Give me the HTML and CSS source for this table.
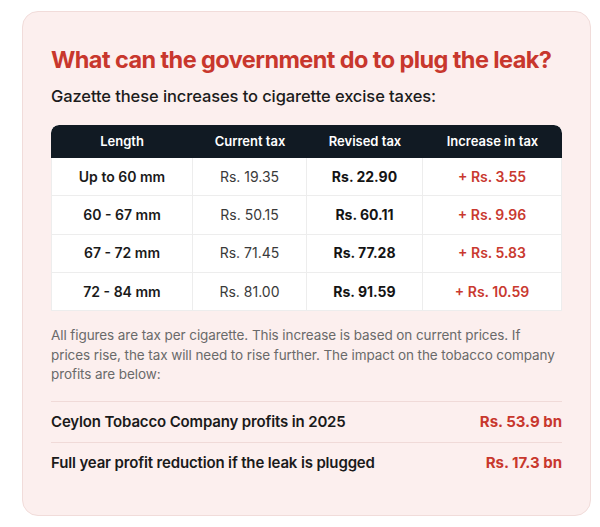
FILE: index.html
```html
<!DOCTYPE html>
<html lang="en">
<head>
<meta charset="utf-8">
<title>Plug the leak</title>
<link rel="stylesheet" href="styles.css">
</head>
<body>
<div class="page">
  <section class="card">
    <h1 class="title">What can the government do to plug the leak?</h1>
    <p class="subtitle">Gazette these increases to cigarette excise taxes:</p>
    <table class="tax-table">
      <colgroup>
        <col class="c1"><col class="c2"><col class="c3"><col class="c4">
      </colgroup>
      <thead>
        <tr><th>Length</th><th>Current tax</th><th>Revised tax</th><th>Increase in tax</th></tr>
      </thead>
      <tbody>
        <tr><td class="len">Up to 60 mm</td><td class="cur">Rs. 19.35</td><td class="rev">Rs. 22.90</td><td class="inc">+ Rs. 3.55</td></tr>
        <tr><td class="len">60 - 67 mm</td><td class="cur">Rs. 50.15</td><td class="rev">Rs. 60.11</td><td class="inc">+ Rs. 9.96</td></tr>
        <tr><td class="len">67 - 72 mm</td><td class="cur">Rs. 71.45</td><td class="rev">Rs. 77.28</td><td class="inc">+ Rs. 5.83</td></tr>
        <tr><td class="len">72 - 84 mm</td><td class="cur">Rs. 81.00</td><td class="rev">Rs. 91.59</td><td class="inc">+ Rs. 10.59</td></tr>
      </tbody>
    </table>
    <p class="note">All figures are tax per cigarette. This increase is based on current prices. If<br>prices rise, the tax will need to rise further. The impact on the tobacco company profits are below:</p>
    <div class="profits">
      <div class="profit-row"><span class="label">Ceylon Tobacco Company profits in 2025</span><span class="value">Rs. 53.9 bn</span></div>
      <div class="profit-row"><span class="label">Full year profit reduction if the leak is plugged</span><span class="value">Rs. 17.3 bn</span></div>
    </div>
  </section>
</div>
</body>
</html>
```

FILE: styles.css
```css
* { box-sizing: border-box; }
html, body { margin: 0; padding: 0; background: #ffffff; }
body { font-family: Inter, "Noto Sans", "Liberation Sans", sans-serif; color: #1a1a1a; }

.page { padding: 11px 9px 10px 22px; }

.card {
  background: #fcefee;
  border: 1px solid #f1dcda;
  border-radius: 16px;
  padding: 32px 28px 32px 28px;
}

.title {
  margin: 0;
  font-size: 23.5px;
  line-height: 32px;
  font-weight: 700;
  color: #c8372d;
  letter-spacing: -0.58px;
  white-space: nowrap;
}

.subtitle {
  margin: 8px 0 0;
  font-size: 16.5px;
  line-height: 24px;
  font-weight: 500;
  color: #1c1c1c;
  letter-spacing: -0.1px;
}

.tax-table {
  margin-top: 17px;
  width: 100%;
  table-layout: fixed;
  border-collapse: separate;
  border-spacing: 0;
  background: #ffffff;
  border-radius: 8px 8px 0 0;
  overflow: hidden;
}
.c1 { width: 142px; }
.c2 { width: 114px; }
.c3 { width: 116px; }
.c4 { width: 139px; }

.tax-table th {
  background: #111a23;
  color: #ffffff;
  font-size: 13px;
  font-weight: 600;
  line-height: 18px;
  padding: 7px 6px 8px;
  text-align: center;
}
.tax-table th:first-child { border-top-left-radius: 8px; }
.tax-table th:last-child { border-top-right-radius: 8px; }

.tax-table td {
  font-size: 14px;
  line-height: 20px;
  padding: 8.66px 6px;
  text-align: center;
  border-bottom: 1px solid #ededed;
  border-right: 1px solid #ededed;
}
.tax-table td:first-child { border-left: 1px solid #ededed; }

.len { font-weight: 600; color: #1a1a1a; }
.cur { font-weight: 400; color: #3a3a3a; }
.rev { font-weight: 700; color: #141414; }
.inc { font-weight: 600; color: #c9392f; }

.note {
  margin: 15px -2px 0 0;
  font-size: 13.5px;
  line-height: 19.6px;
  letter-spacing: -0.08px;
  color: #6a6a6a;
}

.profits { margin-top: 16px; }
.profit-row {
  display: flex;
  justify-content: space-between;
  align-items: baseline;
  border-top: 1px solid #f0dad8;
  padding: 9px 0;
  font-size: 15px;
  line-height: 22px;
}
.label { font-weight: 600; color: #1a1a1a; letter-spacing: -0.15px; }
.value { font-weight: 700; color: #c8372d; }
```
